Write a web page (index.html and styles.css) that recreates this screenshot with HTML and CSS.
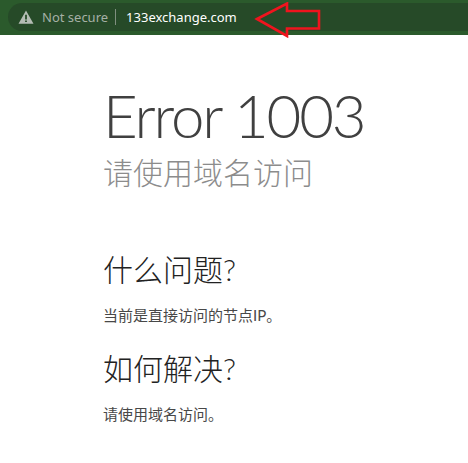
FILE: index.html
```html
<!DOCTYPE html>
<html lang="zh">
<head>
<meta charset="utf-8">
<title>Error 1003</title>
<link rel="stylesheet" href="styles.css">
</head>
<body>
<header class="toolbar">
  <div class="omnibox">
    <svg class="warn" width="16" height="14" viewBox="0 0 16 14"><path d="M8 0.5 L15.5 13.8 H0.5 Z M7.1 4.8 V9.4 H8.9 V4.8 Z M7.1 10.4 V12.1 H8.9 V10.4 Z" fill="#b4bcb4" fill-rule="evenodd"/></svg>
    <span class="secure">Not secure</span>
    <span class="sep"></span>
    <span class="url">133exchange.com</span>
  </div>
  <svg class="arrow" width="68" height="36" viewBox="0 0 68 36"><path d="M3 17 L33 1.5 V9 H65 V26.5 H33 V34 Z" fill="none" stroke="#f0141e" stroke-width="2.6"/></svg>
</header>
<main class="page">
  <h1 class="title">Error 1003</h1>
  <h2 class="subtitle">请使用域名访问</h2>
  <section class="block first">
    <h3 class="question">什么问题?</h3>
    <p class="answer">当前是直接访问的节点IP。</p>
  </section>
  <section class="block">
    <h3 class="question">如何解决?</h3>
    <p class="answer">请使用域名访问。</p>
  </section>
</main>
</body>
</html>
```
FILE: styles.css
```css
* { box-sizing: border-box; }
html, body { margin: 0; padding: 0; background: #fff; }
body { width: 468px; height: 463px; overflow: hidden; font-family: "Lato", "Noto Sans CJK SC", sans-serif; }
.toolbar { position: relative; height: 35px; background: #2b5a2c; display: flex; padding: 3px 0 4px 8px; }
.omnibox { width: 460px; height: 28px; background: #264a28; border-radius: 14px 0 0 14px; display: flex; align-items: center; padding-left: 10px; font-family: "Noto Sans", sans-serif; font-size: 13px; }
.warn { margin-right: 8px; }
.secure { color: #a5b0a5; }
.sep { width: 1px; height: 16px; background: #7f8f7f; margin: 0 10px 0 7px; }
.url { color: #fff; }
.arrow { position: absolute; left: 254px; top: 2px; }
.page { padding: 45px 0 0 103px; color: #404040; }
.title { margin: 0; font-size: 60px; line-height: 70px; font-weight: 300; color: #404040; letter-spacing: -2.2px; }
.subtitle { margin: 2px 0 0; font-size: 30px; line-height: 40px; font-weight: 300; color: #8c8c8c; }
.block { margin: 0; }
.block.first { margin-top: 57px; }
.question { margin: 0; font-size: 30px; line-height: 40px; font-weight: 300; color: #222; }
.answer { margin: 16px 0 23px; font-size: 15px; line-height: 20px; font-weight: 400; color: #484848; }
```
